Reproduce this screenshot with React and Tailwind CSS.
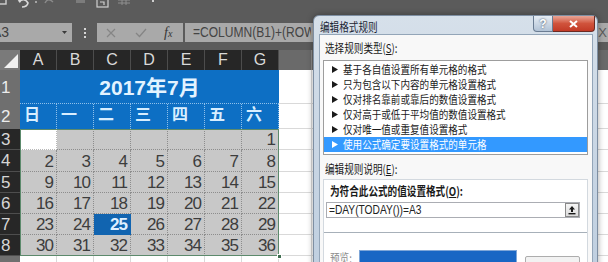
import React from 'react'

const cols = ['A', 'B', 'C', 'D', 'E', 'F', 'G']
const days = ['日', '一', '二', '三', '四', '五', '六']

const body = [
  { n: 3, h: 'h-[21px]', cells: ['', '', '', '', '', '', '1'] },
  { n: 4, h: 'h-[22px]', cells: ['2', '3', '4', '5', '6', '7', '8'] },
  { n: 5, h: 'h-[21px]', cells: ['9', '10', '11', '12', '13', '14', '15'] },
  { n: 6, h: 'h-[21px]', cells: ['16', '17', '18', '19', '20', '21', '22'] },
  { n: 7, h: 'h-[21px]', cells: ['23', '24', '25', '26', '27', '28', '29'] },
  { n: 8, h: 'h-[21px]', cells: ['30', '31', '32', '33', '34', '35', '36'] },
]

const rules = [
  '基于各自值设置所有单元格的格式',
  '只为包含以下内容的单元格设置格式',
  '仅对排名靠前或靠后的数值设置格式',
  '仅对高于或低于平均值的数值设置格式',
  '仅对唯一值或重复值设置格式',
  '使用公式确定要设置格式的单元格',
]

// dialog text in the screenshot is narrower than the font, squeeze it
function Sq({ children, className = 'scale-x-[0.8]' }) {
  return <span className={`inline-block origin-left whitespace-nowrap ${className}`}>{children}</span>
}

function RowHead({ n, dark }) {
  return (
    <div
      className={`w-[20px] shrink-0 flex items-center pl-[1px] text-[17px] leading-none ${
        dark ? 'bg-[#272727] text-[#d6d6d6] border-b border-[#4e4e4e]' : 'bg-[#6f6f6f] text-[#ececec]'
      }`}
    >
      {n}
    </div>
  )
}

function Tail() {
  return (
    <>
      <div className="w-[33px] shrink-0 bg-white border-r border-b border-[#d9d9d9]" />
      <div className="flex-1 bg-white border-b border-[#d9d9d9]" />
    </>
  )
}

function Arrow({ white }) {
  return (
    <svg width="6" height="7" viewBox="0 0 6 7" className="shrink-0">
      <path d="M0 0 L6 3.5 L0 7 Z" fill={white ? '#ffffff' : '#1a1a1a'} />
    </svg>
  )
}

export default function App() {
  return (
    <div className="relative w-[608px] h-[262px] overflow-hidden bg-[#5b5b5b] font-['Liberation_Sans','Noto_Sans_CJK_SC',sans-serif]">
      {/* quick access toolbar, cut at the top */}
      <div className="h-[21px] flex items-start">
        <svg width="170" height="14" viewBox="0 0 170 14" className="-mt-[1px]">
          <rect x="-2" y="-4" width="8" height="9" fill="none" stroke="#d0d0d0" strokeWidth="1.4" />
          <path d="M19 3 Q24 -2 28 4 Q27 8 22 8" fill="none" stroke="#d8d8d8" strokeWidth="1.6" />
          <path d="M17 0 L20 4 L22 0 Z" fill="#d8d8d8" />
          <circle cx="36" cy="3" r="1" fill="#bdbdbd" />
          <path d="M53 3 Q48 -2 45 4" fill="none" stroke="#8a8a8a" strokeWidth="1.4" />
          <rect x="76" y="-4" width="9" height="8" fill="#7c7c7c" />
          <rect x="97" y="-3" width="11" height="11" fill="none" stroke="#d0d0d0" strokeWidth="1.2" />
          <path d="M100 3 L104 3 L104 6" fill="none" stroke="#d0d0d0" strokeWidth="1.2" />
          <path d="M118 1 H130 M118 4 H130 M122 -2 V6 M126 -2 V6" stroke="#8f8f8f" strokeWidth="1" />
          <rect x="152" y="-3" width="2" height="6" fill="#cfcfcf" />
        </svg>
      </div>

      {/* formula bar */}
      <div className="h-[29px] flex items-start pt-[2px]">
        <div className="ml-[-12px] w-[84px] h-[19px] bg-[#a9a9a9] flex items-center pl-[4px] text-[14px] text-[#3f3f3f]">
          A3
          <svg width="5" height="3" viewBox="0 0 5 3" className="ml-auto mr-[5px]">
            <path d="M0 0 H5 L2.5 3 Z" fill="#3a3a3a" />
          </svg>
        </div>
        <div className="w-[25px] h-[19px] flex flex-col items-center justify-center gap-[2px]">
          <div className="w-[2px] h-[2px] bg-[#d6d6d6]" />
          <div className="w-[2px] h-[2px] bg-[#d6d6d6]" />
          <div className="w-[2px] h-[2px] bg-[#d6d6d6]" />
        </div>
        <div className="w-[86px] h-[19px] bg-[#a9a9a9] flex items-center">
          <svg width="10" height="10" viewBox="0 0 10 10" className="ml-[9px]">
            <path d="M1 1 L9 9 M9 1 L1 9" stroke="#858585" strokeWidth="1.2" />
          </svg>
          <svg width="12" height="10" viewBox="0 0 12 10" className="ml-[19px]">
            <path d="M1 5 L4.5 8.5 L11 1" fill="none" stroke="#858585" strokeWidth="1.3" />
          </svg>
          <span className="ml-[17px] font-['Liberation_Serif',serif] italic text-[14px] text-[#353535]">
            f<span className="text-[10px]">x</span>
          </span>
        </div>
        <div className="ml-[2px] flex-1 h-[19px] bg-[#a9a9a9] flex items-center text-[14px] text-[#444444]">
          <div className="ml-[8px] w-[118px] overflow-hidden">
            <Sq className="scale-x-[0.86]">=COLUMN(B1)+(ROW</Sq>
          </div>
          <span className="ml-auto mr-[1px] text-[13px] text-[#5a5a5a]">X</span>
        </div>
      </div>

      {/* column headers */}
      <div className="h-[20px] flex">
        <div className="w-[20px] shrink-0 bg-[#7a7a7a] flex items-end justify-end pr-[2px] pb-[2px]">
          <svg width="14" height="14" viewBox="0 0 14 14">
            <path d="M14 0 L14 14 L0 14 Z" fill="#f2f2f2" />
          </svg>
        </div>
        {cols.map((c) => (
          <div
            key={c}
            className="w-[37px] shrink-0 bg-[#262626] border-r border-[#4c4c4c] flex items-center justify-center text-[16px] text-[#d9d9d9]"
          >
            {c}
          </div>
        ))}
        <div className="w-[33px] shrink-0 bg-[#6a6a6a] border-r border-[#8c8c8c]" />
        <div className="flex-1 bg-[#6a6a6a]" />
      </div>

      {/* row 1: merged title */}
      <div className="h-[34px] flex">
        <RowHead n={1} />
        <div className="w-[259px] shrink-0 bg-[#0d6fc4] border-b border-dotted border-[#8fc0ea] flex items-center justify-center pt-[3px] text-[21px] font-bold text-[#e3f3ff]">
          2017年7月
        </div>
        <Tail />
      </div>

      {/* row 2: weekdays */}
      <div className="h-[25px] flex">
        <RowHead n={2} />
        {days.map((d) => (
          <div
            key={d}
            className="w-[37px] shrink-0 bg-[#0d6fc4] border-r border-dotted border-[#8fc0ea] flex items-end pl-[4px] pb-[2px] text-[16px] font-bold text-[#d8eeff]"
          >
            {d}
          </div>
        ))}
        <Tail />
      </div>

      {/* calendar body */}
      <div className="flex">
        <div className="flex flex-col">
          {body.map((r) => (
            <div key={r.n} className={`${r.h} flex`}>
              <RowHead n={r.n} dark />
            </div>
          ))}
        </div>
        <div className="relative flex flex-col outline outline-1 -outline-offset-1 outline-[#5c8a6c]">
          {body.map((r) => (
            <div key={r.n} className={`${r.h} flex`}>
              {r.cells.map((v, i) => {
                const active = r.n === 3 && i === 0
                const today = v === '25'
                return (
                  <div
                    key={i}
                    className={`w-[37px] shrink-0 border-r border-b border-dotted flex items-end justify-end pr-[3px] text-[17px] leading-[19px] tracking-[-1px] ${
                      active
                        ? 'bg-white border-[#b9b9b9]'
                        : today
                        ? 'bg-[#1164b0] border-[#1164b0] text-[#dff0ff] font-bold'
                        : 'bg-[#c8c8c8] border-[#8d8d8d] text-[#3d3d3d]'
                    }`}
                  >
                    {v}
                  </div>
                )
              })}
            </div>
          ))}
          <div className="absolute right-[-3px] bottom-[-3px] w-[5px] h-[5px] bg-[#3e6e50] border border-white" />
        </div>
        <div className="flex-1 flex flex-col">
          {body.map((r) => (
            <div key={r.n} className={`${r.h} flex`}>
              <Tail />
            </div>
          ))}
        </div>
      </div>

      {/* row 9 */}
      <div className="h-[10px] flex">
        <div className="w-[20px] shrink-0 bg-[#6f6f6f]" />
        {cols.map((c) => (
          <div key={c} className="w-[37px] shrink-0 bg-white border-r border-[#d9d9d9]" />
        ))}
        <div className="w-[33px] shrink-0 bg-white border-r border-[#d9d9d9]" />
        <div className="flex-1 bg-white" />
      </div>

      {/* dialog window */}
      <div className="absolute left-[313px] top-[15px] w-[285px] h-[262px] rounded-t-[6px] border border-[#7e8fa3] bg-gradient-to-b from-[#d6e0ea] via-[#c9d6e4] to-[#bfcfe0] shadow-[0_0_6px_rgba(0,0,0,0.35)] flex flex-col">
        <div className="h-[21px] flex items-start">
          <span className="ml-[6px] mt-[4px] text-[12px] leading-[14px] text-[#1c2633] font-['Noto_Sans_CJK_SC',sans-serif]">
            <Sq>编辑格式规则</Sq>
          </span>
          <div className="ml-auto mr-[2px] flex">
            <div className="w-[20px] h-[16px] rounded-bl-[4px] border border-t-0 border-[#6a7c92] bg-gradient-to-b from-[#e6edf4] to-[#b2c3d6] flex items-center justify-center text-[12px] font-bold text-white [text-shadow:0_0_2px_#2a3a50]">
              ?
            </div>
            <div className="w-[42px] h-[16px] rounded-br-[4px] border border-t-0 border-l-0 border-[#6b2a22] bg-gradient-to-b from-[#e9a596] via-[#d0533c] to-[#c23a26] flex items-center justify-center">
              <svg width="9" height="8" viewBox="0 0 9 8">
                <path d="M1 1 L8 7 M8 1 L1 7" stroke="#ffffff" strokeWidth="2" />
              </svg>
            </div>
          </div>
        </div>

        <div className="ml-[5px] mr-[4px] flex-1 bg-[#f8f8f8] border border-[#93a5b8] flex flex-col font-['Noto_Sans_CJK_SC',sans-serif] text-[12px] text-[#1a1a1a]">
          <div className="mt-[5px] pl-[5px] leading-[16px]">
            <Sq>
              选择规则类型(<span className="underline">S</span>):
            </Sq>
          </div>
          <div className="mt-[4px] ml-[3px] w-[265px] border border-[#9d9d9d] bg-white pt-[1px] pb-[2px]">
            {rules.map((r, i) => {
              const sel = i === rules.length - 1
              return (
                <div
                  key={r}
                  className={`h-[15px] flex items-center pl-[8px] gap-[5px] text-[11px] leading-[15px] ${
                    sel ? 'bg-[#3399ff] text-white' : ''
                  }`}
                >
                  <Arrow white={sel} />
                  <Sq className="scale-x-[0.87]">{r}</Sq>
                </div>
              )
            })}
          </div>
          <div className="mt-[6px] pl-[5px] leading-[16px]">
            <Sq>
              编辑规则说明(<span className="underline">E</span>):
            </Sq>
          </div>
          <div className="mt-[2px] ml-[3px] w-[265px] flex-1 border border-[#d3d9df] bg-white flex flex-col">
            <div className="h-[53px] border-b border-[#a7b0b9] flex flex-col">
              <div className="mt-[3px] pl-[6px] leading-[16px] font-bold">
                <Sq>
                  为符合此公式的值设置格式(<span className="underline">O</span>):
                </Sq>
              </div>
              <div className="mt-[3px] ml-[2px] w-[254px] h-[16px] border border-[#abadb3] bg-white flex items-center pl-[2px] font-['Liberation_Sans',sans-serif] text-[12px] text-[#222222]">
                <Sq className="scale-x-[0.85]">=DAY(TODAY())=A3</Sq>
                <div className="ml-auto w-[14px] h-[14px] border border-[#8a8a8a] bg-gradient-to-b from-[#f6f6f6] to-[#dcdcdc] flex items-center justify-center">
                  <svg width="8" height="10" viewBox="0 0 8 10">
                    <path d="M4 1 L7 4.5 L5 4.5 L5 7 L3 7 L3 4.5 L1 4.5 Z" fill="#1a1a1a" />
                    <rect x="0.5" y="8" width="7" height="1.4" fill="#1a1a1a" />
                  </svg>
                </div>
              </div>
            </div>
            <div className="flex items-start pl-[6px] pt-[4px]">
              <span className="mt-[12px] w-[29px] text-[#8a8a8a]">
                <Sq>预览:</Sq>
              </span>
              <div className="mt-[13px] w-[158px] h-[20px] bg-[#1866c4] border border-[#7ea6d8]" />
              <div className="ml-[8px] mt-[19px] w-[55px] h-[20px] rounded-[2px] border border-[#adadad] bg-[#f2f2f2]" />
            </div>
          </div>
        </div>
      </div>
    </div>
  )
}
